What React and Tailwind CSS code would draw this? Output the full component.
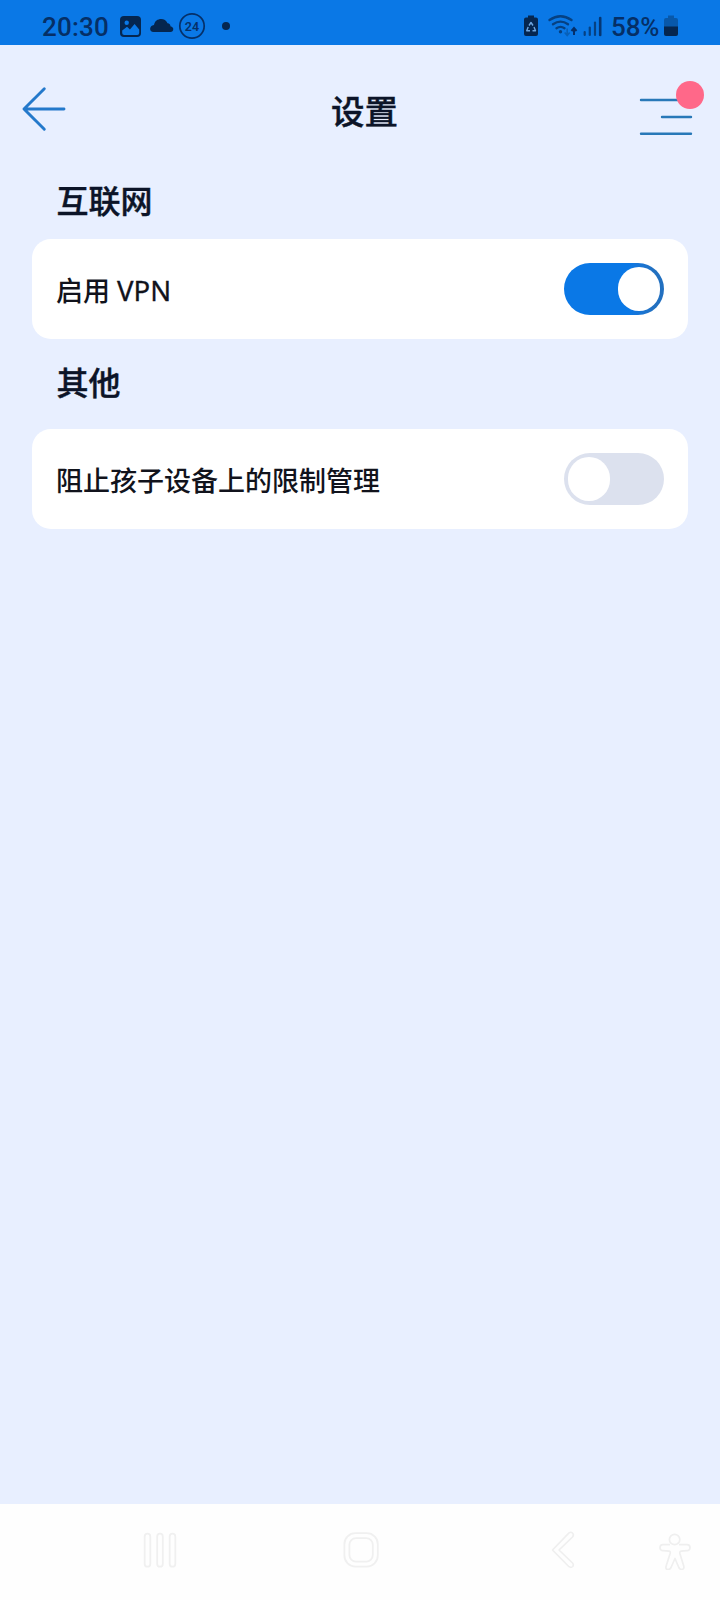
import React from "react";

const textFont = "font-['Noto_Sans','Noto_Sans_CJK_SC',sans-serif]";

function StatusBar() {
  return (
    <header className="flex h-[45px] shrink-0 items-start bg-[#0a78e6] text-[#05264f]">
      <span className="ml-[42px] mt-[12px] w-[78px] font-['Roboto',sans-serif] text-[26px] font-medium leading-[31px] tracking-[0.2px] text-[#052f66]">
        20:30
      </span>
      <svg className="h-[45px] w-[114px]" viewBox="120 0 114 45" fill="none">
        <rect x="120" y="16" width="21" height="21" rx="4" fill="#05264f" />
        <circle cx="126.700" cy="22.700" r="2.200" fill="#0a78e6" />
        <path d="M122.200 30.500L127 26.800L129.900 29.400L134.600 24L139.200 29.600V33Q139.200 35 137.200 35H124.200Q122.200 35 122.200 33Z" fill="#0a78e6" />
        <path d="M153.500 32C149 32 149 25.400 154 25C155 17.500 165.500 17 167.500 23.300C169.500 23.400 170.500 24.800 170.400 26.200C174.500 26.800 174 32 170.500 32Z" fill="#05264f" />
        <circle cx="192" cy="26" r="12.200" stroke="#053069" strokeWidth="1.700" />
        <text x="192" y="30.700" textAnchor="middle" fill="#053069" fontFamily="Roboto, sans-serif" fontSize="12.500" fontWeight="600">24</text>
        <circle cx="226" cy="26" r="4" fill="#05264f" />
      </svg>
      <svg className="ml-auto h-[45px] w-[87px]" viewBox="524 0 87 45" fill="none">
        <path d="M528 17.500v-2h6v2h2q2 0 2 2V34q0 2-2 2h-10q-2 0-2-2V19.500q0-2 2-2z" fill="#05264f" />
        <path d="M529 25.500L531 22.500L533 25.500M534 27L535.500 30.800H532.500M530 30.800H526.700L528.200 27" stroke="#6da5df" strokeWidth="1.400" strokeLinejoin="round" />
        <g stroke="#064182" strokeWidth="2.400" strokeLinecap="round">
          <path d="M549.500 20Q560.500 12.500 571.500 20" />
          <path d="M553 24.300Q560.500 19 568 24.300" />
          <path d="M556.500 28.200Q560.500 25.500 564.500 28.200" />
        </g>
        <circle cx="560.500" cy="31.800" r="1.700" fill="#064182" />
        <path d="M567.200 28.500V35M564.700 32.500l2.500 3 2.500-3" stroke="#0860b8" strokeWidth="1.600" />
        <path d="M574 35v-6.500M571.500 31l2.500-3 2.500 3" stroke="#052f69" strokeWidth="2" />
        <g stroke="#064182" strokeWidth="2.200" strokeLinecap="round">
          <path d="M584.700 32v3" />
          <path d="M589.800 27.500V35" />
          <path d="M595 22.500V35" />
          <path d="M600.200 18V35" strokeWidth="2.600" stroke="#053673" />
        </g>
      </svg>
      <span className="mt-[12px] w-[53px] whitespace-nowrap font-['Roboto',sans-serif] text-[26px] font-medium leading-[31px] tracking-[-0.1px] text-[#052f66]">
        58%
      </span>
      <svg className="mr-[42px] h-[45px] w-[14px]" viewBox="664 0 14 45">
        <path d="M668 18v-2.500h6V18h2q2 0 2 2v7h-14v-7q0-2 2-2z" fill="#0858aa" />
        <path d="M664 26.500h14V34q0 2-2 2h-10q-2 0-2-2z" fill="#05264f" />
      </svg>
    </header>
  );
}

function TitleBar() {
  return (
    <div className="flex h-[127px] shrink-0 items-start justify-between">
      <button aria-label="返回" className="ml-[20px] mt-[40px]">
        <svg className="h-[48px] w-[48px]" viewBox="20 85 48 48" fill="none" stroke="#2479cb" strokeWidth="2.900" strokeLinecap="round" strokeLinejoin="round">
          <path d="M44.300 88.800L24 109l20.300 20.300M24 109h40" />
        </svg>
      </button>
      <h1 className="ml-[23px] mt-[42px] text-[33.500px] font-medium leading-[48px] text-[#0c1428] [-webkit-text-stroke:0.4px_#0c1428]">
        设置
      </h1>
      <button aria-label="菜单" className="mr-[12px] mt-[33px]">
        <svg className="h-[60px] w-[70px]" viewBox="638 78 70 60">
          <g fill="none" stroke="#2878b8" strokeWidth="2.400" strokeLinecap="round">
            <path d="M641 100h50M662 117h29M641 133.700h50" />
          </g>
          <circle cx="690" cy="95" r="14" fill="#ff6889" />
        </svg>
      </button>
    </div>
  );
}

function Toggle({ on }) {
  return (
    <button
      role="switch"
      aria-checked={on}
      className={
        on
          ? "flex h-[52px] w-[100px] items-center justify-end rounded-full bg-linear-to-r from-[#0a78e6] from-65% to-[#2270c0] to-90% px-1"
          : "flex h-[52px] w-[100px] items-center justify-start rounded-full bg-[#dce1ee] px-1"
      }
    >
      <span className="h-11 w-[42px] rounded-full bg-white" />
    </button>
  );
}

function SettingCard({ children, on }) {
  return (
    <div className="mx-8 flex h-[100px] items-center justify-between rounded-[19px] bg-white pl-6 pr-6">
      <span className="pt-[3px] text-[27px] font-medium leading-[40px] text-[#11131c]">{children}</span>
      <Toggle on={on} />
    </div>
  );
}

function NavBar() {
  return (
    <nav className="flex h-24 shrink-0 items-center bg-[#fefefe] pb-1">
      <svg className="ml-[142px] h-[40px] w-[36px]" viewBox="142 1530 36 40" fill="none" stroke="#f0f0f0" strokeWidth="1.800">
        <rect x="144.700" y="1533.700" width="5.600" height="33" rx="2.800" />
        <rect x="157.200" y="1533.700" width="5.600" height="33" rx="2.800" />
        <rect x="169.700" y="1533.700" width="5.600" height="33" rx="2.800" />
      </svg>
      <svg className="ml-[163px] h-[40px] w-[40px]" viewBox="341 1530 40 40" fill="none" stroke="#f0f0f0" strokeWidth="1.800">
        <rect x="344.400" y="1533.200" width="33.400" height="33.400" rx="11" />
        <rect x="349.400" y="1538.200" width="23.400" height="23.400" rx="6.500" />
      </svg>
      <svg className="ml-[169px] h-[40px] w-[28px]" viewBox="550 1530 28 40" fill="none" stroke="#efefef" strokeWidth="1.600" strokeLinejoin="round">
        <path d="M569 1532.900L552.500 1550L569 1566.700Q571 1568.100 572.800 1566.500Q574 1564.500 572.500 1563L559 1550L572.500 1537Q574.300 1534.700 572.500 1533Q571 1531.600 569 1532.900Z" />
      </svg>
      <svg className="ml-[80px] h-[40px] w-[36px]" viewBox="658 1530 36 40" fill="none" stroke="#efefef" strokeWidth="1.700" strokeLinejoin="round">
        <circle cx="674.600" cy="1539.500" r="5.200" />
        <path d="M670 1544.700H663A3 3 0 0 0 663 1550.700L669 1551.200Q670.500 1551.400 670.200 1553.200L666 1566.500Q665.500 1569.500 668 1569.500Q670 1569.500 671 1567.500L675 1558.500L678.800 1567.500Q679.800 1569.500 681.800 1569.500Q684.500 1569 683.800 1566.200L679.800 1553.200Q679.600 1551.400 681 1551.200L687 1550.700A3 3 0 0 0 687 1544.700H679" />
      </svg>
    </nav>
  );
}

function SectionHeading({ children }) {
  return (
    <h2 className="ml-[56.500px] text-[32px] font-medium leading-[45px] text-[#0c1428] [-webkit-text-stroke:0.4px_#0c1428]">
      {children}
    </h2>
  );
}

export default function App() {
  return (
    <div lang="zh-CN" className={`flex h-[1600px] w-[720px] flex-col overflow-hidden bg-[#e8efff] ${textFont}`}>
      <StatusBar />
      <TitleBar />
      <main className="flex grow flex-col">
        <div className="h-[67px] pt-1.5">
          <SectionHeading>互联网</SectionHeading>
        </div>
        <SettingCard on={true}>
          启用 <span className="text-[27.500px] font-normal [-webkit-text-stroke:0.3px_#11131c]">VPN</span>
        </SettingCard>
        <div className="h-[90px] pt-[21px]">
          <SectionHeading>其他</SectionHeading>
        </div>
        <SettingCard on={false}>阻止孩子设备上的限制管理</SettingCard>
      </main>
      <NavBar />
    </div>
  );
}
